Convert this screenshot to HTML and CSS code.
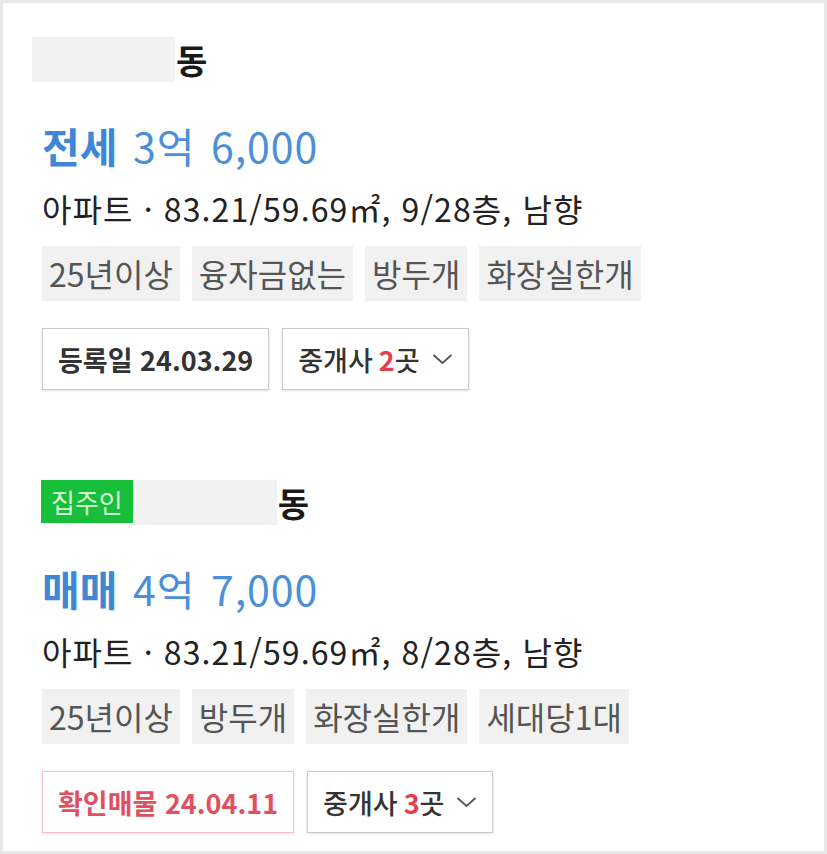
FILE: index.html
```html
<!DOCTYPE html>
<html lang="ko">
<head>
	<meta charset="UTF-8">
	<meta name="viewport" content="width=device-width, initial-scale=1">
	<title>매물 목록</title>
	<link rel="stylesheet" href="styles.css">
</head>
<body>
	<div class="frame">
		<div class="item">
			<div class="item-head">
				<span class="mask mask-lead"></span><span class="dong">동</span>
			</div>
			<div class="price"><strong>전세</strong> 3억 6,000</div>
			<div class="spec">아파트 · 83.21/59.69㎡, 9/28층, 남향</div>
			<ul class="tags">
				<li>25년이상</li>
				<li>융자금없는</li>
				<li>방두개</li>
				<li>화장실한개</li>
			</ul>
			<div class="actions">
				<span class="btn">등록일 24.03.29</span>
				<button type="button" class="btn btn-agent">중개사 <em>2</em>곳
					<svg class="chev" width="21" height="12" viewBox="0 0 21 12"><polyline points="1.5,2 10.5,10 19.5,2" /></svg>
				</button>
			</div>
		</div>

		<div class="item">
			<div class="item-head">
				<span class="badge">집주인</span><span class="mask"></span><span class="dong">동</span>
			</div>
			<div class="price"><strong>매매</strong> 4억 7,000</div>
			<div class="spec">아파트 · 83.21/59.69㎡, 8/28층, 남향</div>
			<ul class="tags">
				<li>25년이상</li>
				<li>방두개</li>
				<li>화장실한개</li>
				<li>세대당1대</li>
			</ul>
			<div class="actions">
				<span class="btn btn-confirm">확인매물 24.04.11</span>
				<button type="button" class="btn btn-agent">중개사 <em>3</em>곳
					<svg class="chev" width="21" height="12" viewBox="0 0 21 12"><polyline points="1.5,2 10.5,10 19.5,2" /></svg>
				</button>
			</div>
		</div>
	</div>
</body>
</html>
```

FILE: styles.css
```css
body {
	margin: 0;
	background: #fff;
	font-family: "Noto Sans CJK KR", "Noto Sans", sans-serif;
	color: #222;
}

.frame {
	box-sizing: border-box;
	width: 827px;
	height: 854px;
	border: 3px solid #e8e8e8;
	padding: 34px 0 0 39px;
	overflow: hidden;
}

.item + .item {
	margin-top: 90px;
}

.item-head {
	display: flex;
	align-items: center;
	height: 45px;
}

.mask {
	display: inline-block;
	width: 144px;
	height: 45px;
	background: #f2f2f2;
}

.mask-lead {
	margin-left: -10px;
	width: 143px;
}

.dong {
	font-size: 34px;
	font-weight: 700;
	color: #1a1a1a;
	margin-left: 1px;
	line-height: 45px;
}

.badge {
	display: inline-block;
	height: 43px;
	line-height: 43px;
	padding: 0 10px;
	margin-left: -1px;
	background: #17bf3a;
	color: #dcf7dc;
	font-size: 26px;
	margin-bottom: 2px;
}

.price {
	margin-top: 37px;
	font-size: 41px;
	line-height: 52px;
	color: #4a8fd8;
	white-space: nowrap;
	letter-spacing: 1px;
	word-spacing: 3px;
}

.price strong {
	font-weight: 700;
	color: #3d87d6;
	letter-spacing: 0;
}

.spec {
	margin-top: 17px;
	font-size: 32px;
	line-height: 40px;
	letter-spacing: 1.1px;
	white-space: nowrap;
}

.tags {
	list-style: none;
	margin: 18px 0 0;
	padding: 0;
	display: flex;
	gap: 12px;
}

.tags li {
	height: 55px;
	line-height: 55px;
	padding: 0 7px;
	background: #f1f1f1;
	color: #555;
	font-size: 32px;
	white-space: nowrap;
}

.actions {
	margin-top: 27px;
	display: flex;
	gap: 13px;
}

.btn {
	box-sizing: border-box;
	display: inline-flex;
	align-items: center;
	height: 62px;
	padding: 0 15px;
	border: 1px solid #c9c9c9;
	box-shadow: 0 1px 2px rgba(0, 0, 0, 0.12);
	background: #fff;
	font-family: inherit;
	font-size: 27px;
	font-weight: 700;
	color: #333;
	white-space: nowrap;
}

.btn-confirm {
	border-color: #f0c3c8;
	color: #e0505f;
}

.btn-agent {
	font-weight: 500;
}

.btn-agent em {
	font-style: normal;
	font-weight: 700;
	color: #e0404e;
	margin-left: 6px;
}

.chev {
	margin-left: 12px;
	fill: none;
	stroke: #555;
	stroke-width: 1.8;
}
```
